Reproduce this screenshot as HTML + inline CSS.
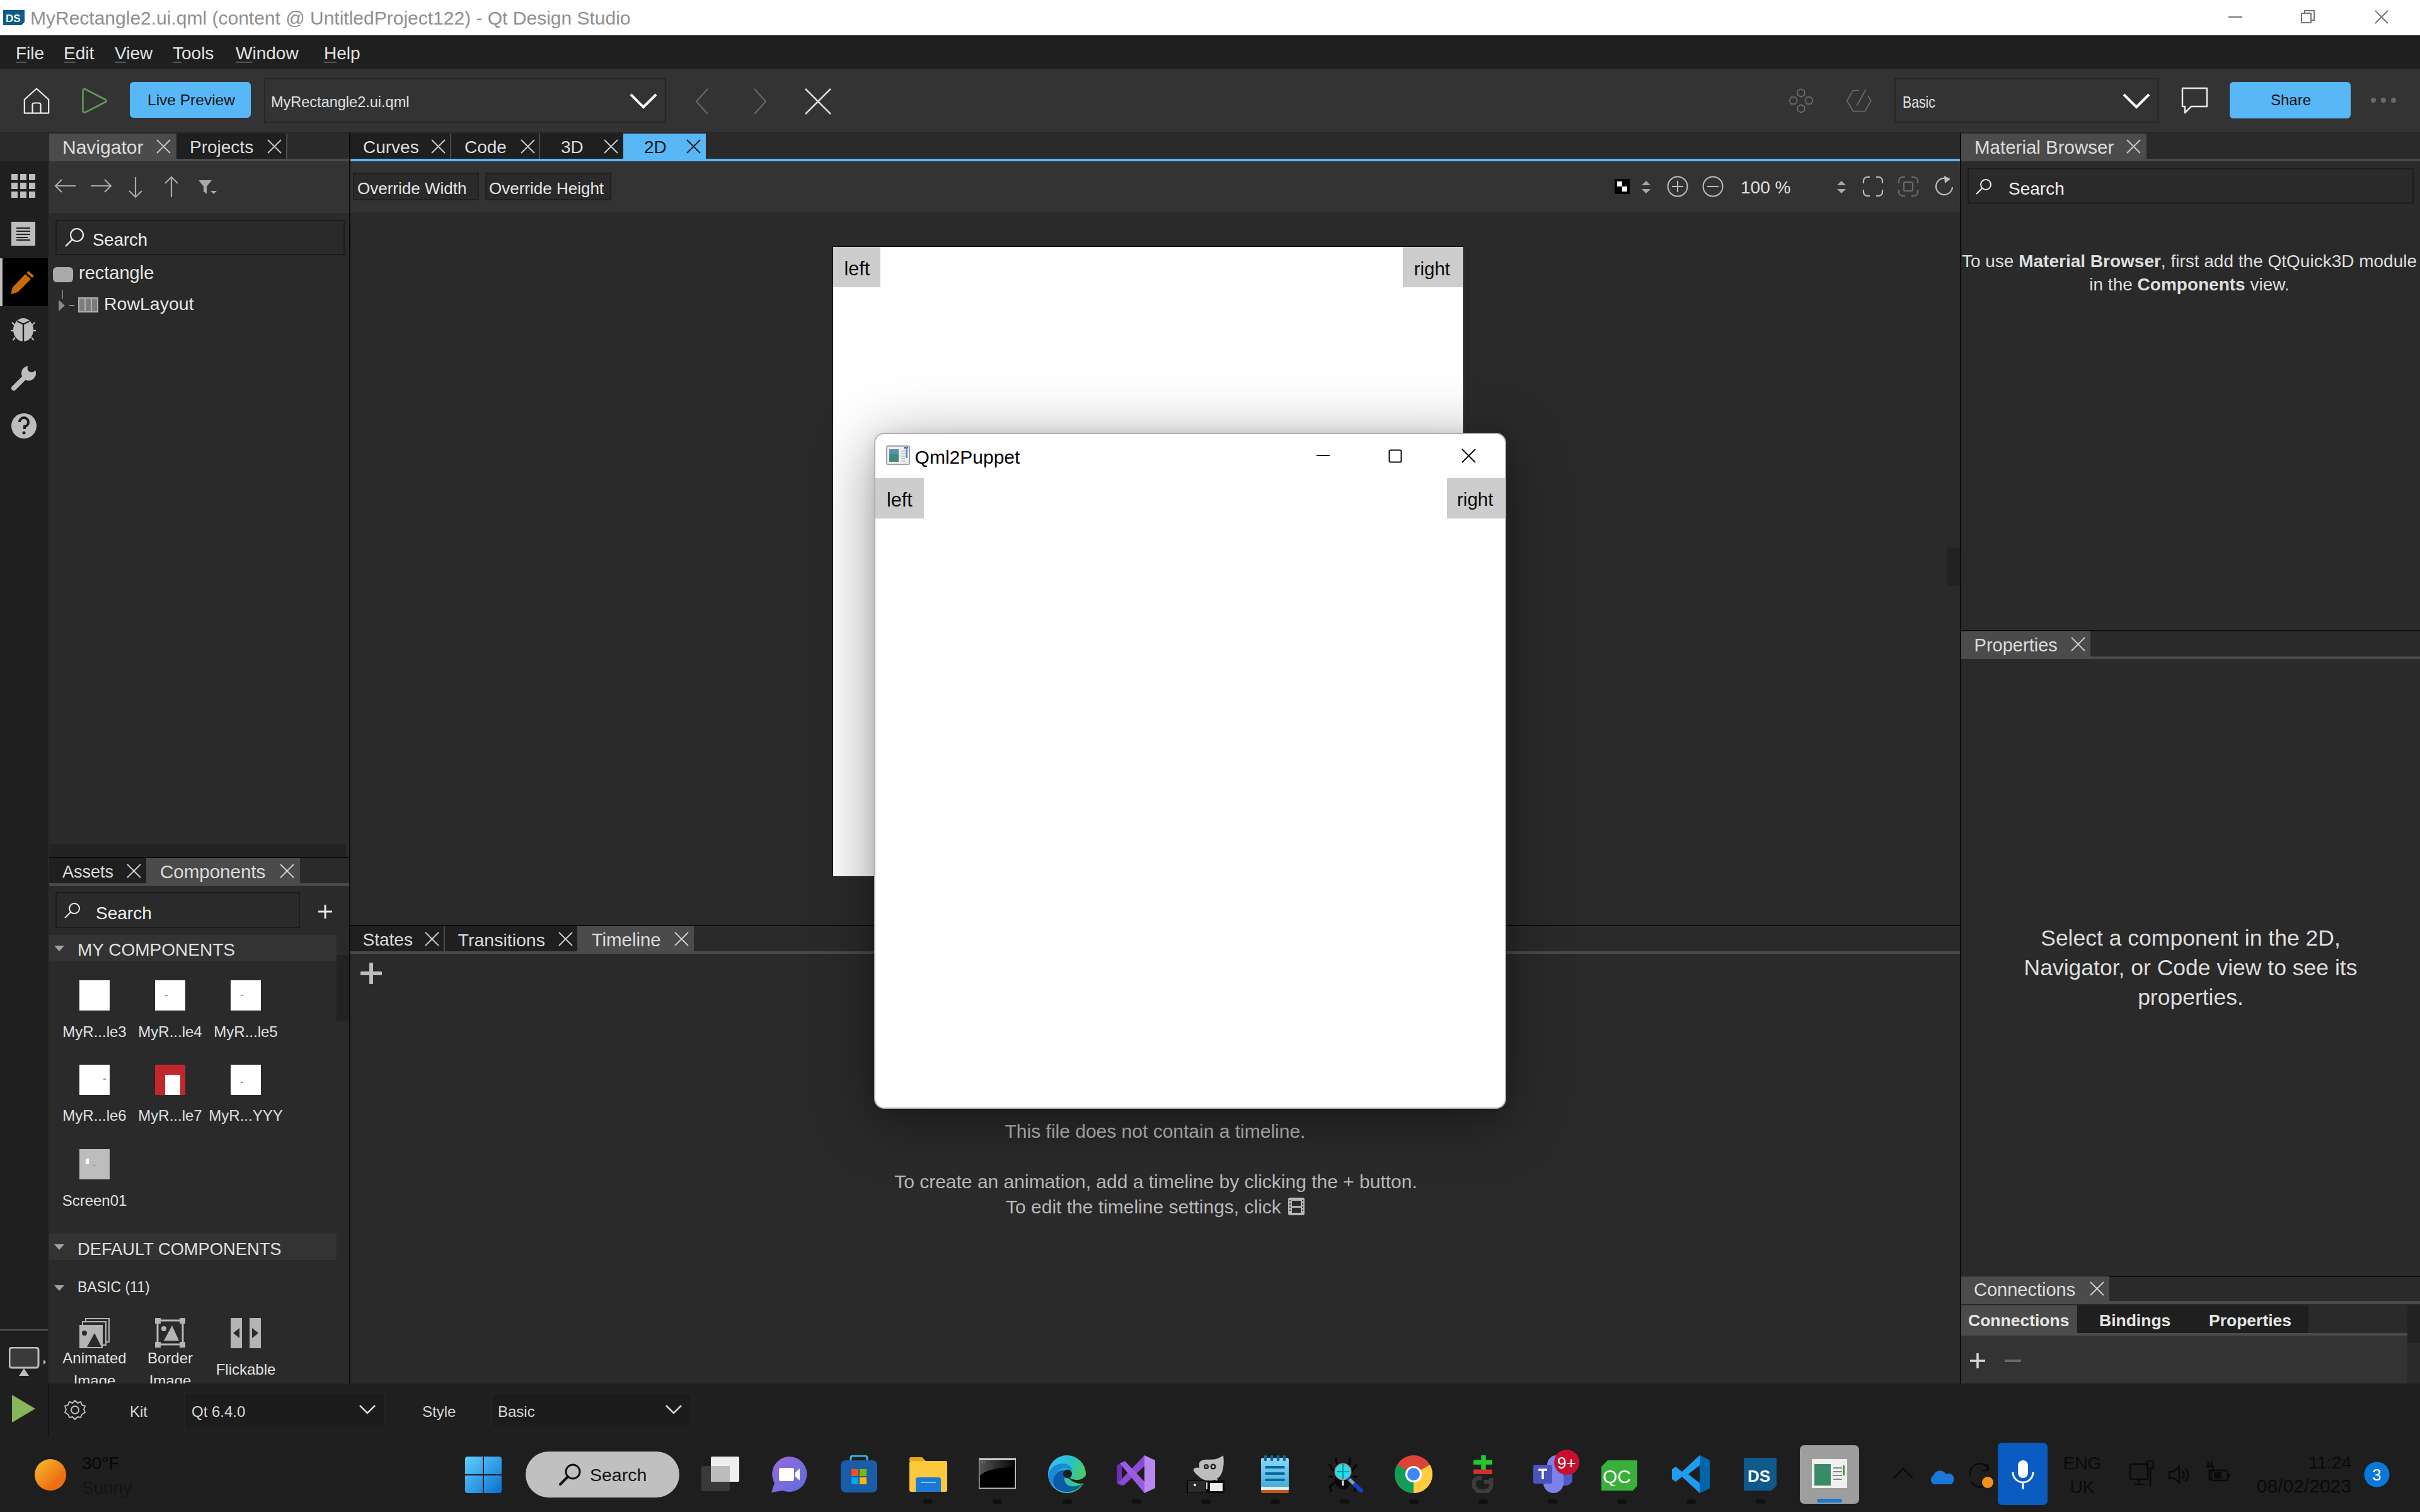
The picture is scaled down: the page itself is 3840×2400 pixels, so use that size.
<!DOCTYPE html>
<html><head><meta charset="utf-8"><style>
html,body{margin:0;padding:0;width:3840px;height:2400px;overflow:hidden;background:#2a2a2a;font-family:"Liberation Sans", sans-serif;}
.a{position:absolute;}
.t{position:absolute;white-space:pre;line-height:1;}
</style></head><body>
<div class="a" style="left:0px;top:0px;width:3840px;height:56px;background:#ffffff;"></div>
<div class="a" style="left:0px;top:56px;width:3840px;height:54px;background:#1f1f1f;"></div>
<div class="a" style="left:0px;top:110px;width:3840px;height:100px;background:#333333;"></div>
<div class="a" style="left:0px;top:210px;width:3840px;height:2px;background:#262626;"></div>
<div class="a" style="left:0px;top:212px;width:3840px;height:44px;background:#2a2a2a;"></div>
<svg class="a" style="left:5px;top:16px;" width="34" height="24" viewBox="0 0 34 24"><path d="M0 0H34V19L29 24H0Z" fill="#0e5a8a"/><text x="4" y="19" font-family="Liberation Sans" font-weight="700" font-size="17" fill="#fff">DS</text></svg>
<div class="t" style="left:48px;top:13.6px;font-size:30px;color:#8f8f8f;font-weight:400;">MyRectangle2.ui.qml (content @ UntitledProject122) - Qt Design Studio</div>
<div class="a" style="left:3536px;top:26px;width:22px;height:2px;background:#777;"></div>
<svg class="a" style="left:3650px;top:15px;" width="24" height="24" viewBox="0 0 24 24"><rect x="2" y="6" width="15" height="15" fill="none" stroke="#777" stroke-width="2"/><path d="M7 6V2H22V17H17" fill="none" stroke="#777" stroke-width="2"/></svg>
<svg class="a" style="left:3767px;top:15px;" width="24" height="24" viewBox="0 0 24 24"><path d="M2 2L22 22M22 2L2 22" stroke="#777" stroke-width="2"/></svg>
<div class="t" style="left:25px;top:71.3px;font-size:28px;color:#e2e2e2;font-weight:400;"><u style="text-decoration-thickness:1px;text-underline-offset:4px">F</u>ile</div>
<div class="t" style="left:101px;top:71.3px;font-size:28px;color:#e2e2e2;font-weight:400;"><u style="text-decoration-thickness:1px;text-underline-offset:4px">E</u>dit</div>
<div class="t" style="left:182px;top:71.3px;font-size:28px;color:#e2e2e2;font-weight:400;"><u style="text-decoration-thickness:1px;text-underline-offset:4px">V</u>iew</div>
<div class="t" style="left:274px;top:71.3px;font-size:28px;color:#e2e2e2;font-weight:400;"><u style="text-decoration-thickness:1px;text-underline-offset:4px">T</u>ools</div>
<div class="t" style="left:374px;top:71.3px;font-size:28px;color:#e2e2e2;font-weight:400;"><u style="text-decoration-thickness:1px;text-underline-offset:4px">W</u>indow</div>
<div class="t" style="left:514px;top:71.3px;font-size:28px;color:#e2e2e2;font-weight:400;"><u style="text-decoration-thickness:1px;text-underline-offset:4px">H</u>elp</div>
<div class="a" style="left:0px;top:256px;width:76px;height:1940px;background:#1f1f1f;"></div>
<div class="a" style="left:76px;top:256px;width:2px;height:1940px;background:#262626;"></div>
<svg class="a" style="left:37px;top:139px;" width="42" height="43" viewBox="0 0 42 43"><path d="M1.8 19L21 1.8L40.2 19V40.6H1.8Z" fill="none" stroke="#ececec" stroke-width="2.2" stroke-linejoin="round"/><path d="M14.5 40.6V27.5A3 3 0 0 1 17.5 24.5H24.5A3 3 0 0 1 27.5 27.5V40.6" fill="none" stroke="#ececec" stroke-width="2.2"/></svg>
<svg class="a" style="left:128px;top:139px;" width="44" height="44" viewBox="0 0 44 44"><path d="M3.5 5V37A2.5 2.5 0 0 0 7 39.5L40 22.5A1.8 1.8 0 0 0 40 19.5L7 2.5A2.5 2.5 0 0 0 3.5 5Z" fill="none" stroke="#5c9e52" stroke-width="2.6" stroke-linejoin="round"/></svg>
<div class="a" style="left:206px;top:130px;width:192px;height:57px;background:#57b7f7;border-radius:6px"></div>
<div class="t" style="left:234px;top:147.3px;font-size:24.5px;color:#111;font-weight:400;">Live Preview</div>
<div class="a" style="left:419px;top:124px;width:638px;height:71px;background:#333333;border:2px solid #262626;box-sizing:border-box"></div>
<div class="t" style="left:430px;top:151.1px;font-size:23.5px;color:#e0e0e0;font-weight:400;">MyRectangle2.ui.qml</div>
<svg class="a" style="left:999px;top:147px;" width="44" height="28" viewBox="0 0 44 28"><path d="M2 3L22 23L42 3" fill="none" stroke="#fff" stroke-width="4"/></svg>
<svg class="a" style="left:1102px;top:139px;" width="24" height="44" viewBox="0 0 24 44"><path d="M21 2L3 22L21 42" fill="none" stroke="#6a6a6a" stroke-width="2"/></svg>
<svg class="a" style="left:1194px;top:139px;" width="24" height="44" viewBox="0 0 24 44"><path d="M3 2L21 22L3 42" fill="none" stroke="#6a6a6a" stroke-width="2"/></svg>
<svg class="a" style="left:1276px;top:139px;" width="44" height="44" viewBox="0 0 44 44"><path d="M2 2L42 42M42 2L2 42" fill="none" stroke="#d8d8d8" stroke-width="2.5"/></svg>
<svg class="a" style="left:2836px;top:138px;" width="44" height="44" viewBox="0 0 44 44"><path d="M21.90 3.10L27.44 6.30L27.44 12.70L21.90 15.90L16.36 12.70L16.36 6.30Z" fill="none" stroke="#6e6e6e" stroke-width="1.6"/><path d="M16.00 21.60L12.80 27.14L6.40 27.14L3.20 21.60L6.40 16.06L12.80 16.06Z" fill="none" stroke="#6e6e6e" stroke-width="1.6"/><path d="M40.80 21.60L37.60 27.14L31.20 27.14L28.00 21.60L31.20 16.06L37.60 16.06Z" fill="none" stroke="#6e6e6e" stroke-width="1.6"/><path d="M22.00 28.00L27.54 31.20L27.54 37.60L22.00 40.80L16.46 37.60L16.46 31.20Z" fill="none" stroke="#6e6e6e" stroke-width="1.6"/></svg>
<svg class="a" style="left:2928px;top:138px;" width="44" height="44" viewBox="0 0 44 44"><path d="M22 5.5H12.3L2.8 22L12.3 38.5H31.3L40.8 22L36.3 14.2" fill="none" stroke="#6e6e6e" stroke-width="1.6"/><path d="M18.4 29.5L33 3.5" stroke="#6e6e6e" stroke-width="1.6"/></svg>
<div class="a" style="left:3006px;top:124px;width:419px;height:71px;background:#333333;border:2px solid #262626;box-sizing:border-box"></div>
<div class="t" style="left:3019px;top:150.3px;font-size:25px;color:#e0e0e0;font-weight:400;transform:scaleX(0.85);transform-origin:0 0">Basic</div>
<svg class="a" style="left:3368px;top:147px;" width="44" height="28" viewBox="0 0 44 28"><path d="M2 3L22 23L42 3" fill="none" stroke="#fff" stroke-width="4"/></svg>
<svg class="a" style="left:3461px;top:138px;" width="44" height="44" viewBox="0 0 44 44"><path d="M2 2H41V31H16L6 41V31H2Z" fill="none" stroke="#e8e8e8" stroke-width="2.5" stroke-linejoin="round"/></svg>
<div class="a" style="left:3538px;top:130px;width:192px;height:58px;background:#57b7f7;border-radius:6px"></div>
<div class="t" style="left:3603px;top:146.7px;font-size:24px;color:#111;font-weight:400;">Share</div>
<div class="a" style="left:3762px;top:155px;width:8px;height:8px;background:#6a6a6a;border-radius:50%"></div>
<div class="a" style="left:3778px;top:155px;width:8px;height:8px;background:#6a6a6a;border-radius:50%"></div>
<div class="a" style="left:3794px;top:155px;width:8px;height:8px;background:#6a6a6a;border-radius:50%"></div>
<div class="a" style="left:554px;top:210px;width:2px;height:1986px;background:#0c0c0c;"></div>
<div class="a" style="left:3110px;top:210px;width:2px;height:1986px;background:#0c0c0c;"></div>
<div class="a" style="left:78px;top:252px;width:476px;height:4px;background:#4b4b4b;"></div>
<div class="a" style="left:78px;top:212px;width:202px;height:40px;background:#4b4b4b;"></div>
<div class="t" style="left:99px;top:218.6px;font-size:30px;color:#dcdcdc;font-weight:400;">Navigator</div>
<svg class="a" style="left:248px;top:221px;" width="23" height="23" viewBox="0 0 23 23"><path d="M1 1L22 22M22 1L1 22" stroke="#d0d0d0" stroke-width="1.8" fill="none"/></svg>
<div class="a" style="left:280px;top:212px;width:176px;height:40px;background:#1f1f1f;"></div>
<div class="t" style="left:301px;top:220.3px;font-size:28px;color:#dcdcdc;font-weight:400;">Projects</div>
<svg class="a" style="left:424px;top:221px;" width="23" height="23" viewBox="0 0 23 23"><path d="M1 1L22 22M22 1L1 22" stroke="#d0d0d0" stroke-width="1.8" fill="none"/></svg>
<div class="a" style="left:454px;top:212px;width:2px;height:40px;background:#4b4b4b;"></div>
<div class="a" style="left:78px;top:256px;width:476px;height:82px;background:#333333;"></div>
<svg class="a" style="left:86px;top:283px;" width="36" height="24" viewBox="0 0 36 24"><path d="M2 12H34M12 2L2 12L12 22" fill="none" stroke="#a8a8a8" stroke-width="2.2"/></svg>
<svg class="a" style="left:142px;top:283px;" width="36" height="24" viewBox="0 0 36 24"><path d="M2 12H34M24 2L34 12L24 22" fill="none" stroke="#a8a8a8" stroke-width="2.2"/></svg>
<svg class="a" style="left:203px;top:279px;" width="24" height="36" viewBox="0 0 24 36"><path d="M12 2V34M2 24L12 34L22 24" fill="none" stroke="#a8a8a8" stroke-width="2.2"/></svg>
<svg class="a" style="left:260px;top:279px;" width="24" height="36" viewBox="0 0 24 36"><path d="M12 2V34M2 12L12 2L22 12" fill="none" stroke="#a8a8a8" stroke-width="2.2"/></svg>
<svg class="a" style="left:314px;top:285px;" width="30" height="24" viewBox="0 0 30 24"><path d="M1 1H22L14 11V23L9 19V11Z" fill="#a8a8a8"/><path d="M20 18H30L25 23Z" fill="#a8a8a8"/></svg>
<div class="a" style="left:78px;top:338px;width:476px;height:1022px;background:#2a2a2a;"></div>
<div class="a" style="left:88px;top:349px;width:459px;height:56px;background:#2a2a2a;border:2px solid #1c1c1c;box-sizing:border-box"></div>
<svg class="a" style="left:102px;top:360px;" width="34" height="34" viewBox="0 0 34 34"><circle cx="20" cy="13" r="10" fill="none" stroke="#f0f0f0" stroke-width="2.2"/><path d="M13 20L2 31" stroke="#f0f0f0" stroke-width="2.4"/></svg>
<div class="t" style="left:147px;top:366.7px;font-size:27.5px;color:#f0f0f0;font-weight:400;">Search</div>
<div class="a" style="left:84px;top:424px;width:32px;height:24px;background:#aaaaaa;border-radius:6px"></div>
<div class="t" style="left:125px;top:419.0px;font-size:29px;color:#e6e6e6;font-weight:400;">rectangle</div>
<div class="a" style="left:98px;top:460px;width:2px;height:14px;background:#7a7a7a;"></div>
<svg class="a" style="left:93px;top:476px;" width="11" height="18" viewBox="0 0 11 18"><path d="M0 0L10 9L0 18Z" fill="#8a8a8a"/></svg>
<div class="a" style="left:110px;top:484px;width:8px;height:2px;background:#8a8a8a;"></div>
<svg class="a" style="left:124px;top:472px;" width="32" height="24" viewBox="0 0 32 24"><rect x="1" y="1" width="30" height="22" fill="#7c7c7c" stroke="#b0b0b0" stroke-width="2"/><path d="M11 1V23M21 1V23" stroke="#b0b0b0" stroke-width="2"/></svg>
<div class="t" style="left:165px;top:468.3px;font-size:28.5px;color:#e6e6e6;font-weight:400;">RowLayout</div>
<div class="a" style="left:78px;top:1340px;width:471px;height:20px;background:#222222;"></div>
<div class="a" style="left:78px;top:1360px;width:476px;height:2px;background:#0c0c0c;"></div>
<div class="a" style="left:78px;top:1362px;width:476px;height:44px;background:#2a2a2a;"></div>
<div class="a" style="left:78px;top:1402px;width:476px;height:4px;background:#4b4b4b;"></div>
<div class="a" style="left:78px;top:1362px;width:154px;height:40px;background:#1f1f1f;"></div>
<div class="t" style="left:99px;top:1371.1px;font-size:27px;color:#dcdcdc;font-weight:400;">Assets</div>
<svg class="a" style="left:201px;top:1371px;" width="23" height="23" viewBox="0 0 23 23"><path d="M1 1L22 22M22 1L1 22" stroke="#d0d0d0" stroke-width="1.8" fill="none"/></svg>
<div class="a" style="left:232px;top:1362px;width:244px;height:40px;background:#4b4b4b;"></div>
<div class="t" style="left:254px;top:1369.0px;font-size:29.5px;color:#dcdcdc;font-weight:400;">Components</div>
<svg class="a" style="left:444px;top:1371px;" width="23" height="23" viewBox="0 0 23 23"><path d="M1 1L22 22M22 1L1 22" stroke="#d0d0d0" stroke-width="1.8" fill="none"/></svg>
<div class="a" style="left:78px;top:1406px;width:476px;height:790px;background:#2a2a2a;"></div>
<div class="a" style="left:88px;top:1416px;width:388px;height:57px;background:#2a2a2a;border:2px solid #1c1c1c;box-sizing:border-box"></div>
<svg class="a" style="left:102px;top:1432px;" width="26" height="26" viewBox="0 0 26 26"><circle cx="16" cy="10" r="8" fill="none" stroke="#f0f0f0" stroke-width="2"/><path d="M10 16L1 25" stroke="#f0f0f0" stroke-width="2"/></svg>
<div class="t" style="left:152px;top:1436.3px;font-size:28px;color:#f0f0f0;font-weight:400;">Search</div>
<svg class="a" style="left:505px;top:1436px;" width="22" height="22" viewBox="0 0 22 22"><path d="M11 0V22M0 11H22" stroke="#e6e6e6" stroke-width="3"/></svg>
<div class="a" style="left:78px;top:1484px;width:456px;height:42px;background:#333333;"></div>
<svg class="a" style="left:86px;top:1501px;" width="16" height="9" viewBox="0 0 16 9"><path d="M0 0H16L8 9Z" fill="#a0a0a0"/></svg>
<div class="t" style="left:123px;top:1494.3px;font-size:28px;color:#e0e0e0;font-weight:400;">MY COMPONENTS</div>
<div class="a" style="left:534px;top:1516px;width:20px;height:104px;background:#222222;"></div>
<div class="a" style="left:126px;top:1556px;width:48px;height:48px;background:#ffffff;"></div>
<div class="t" style="left:-1350px;width:3000px;text-align:center;top:1625.7px;font-size:24px;color:#e0e0e0;font-weight:400;">MyR...le3</div>
<div class="a" style="left:246px;top:1556px;width:48px;height:48px;background:#ffffff;"></div>
<div class="t" style="left:-1230px;width:3000px;text-align:center;top:1625.7px;font-size:24px;color:#e0e0e0;font-weight:400;">MyR...le4</div>
<div class="a" style="left:366px;top:1556px;width:48px;height:48px;background:#ffffff;"></div>
<div class="t" style="left:-1110px;width:3000px;text-align:center;top:1625.7px;font-size:24px;color:#e0e0e0;font-weight:400;">MyR...le5</div>
<div class="a" style="left:126px;top:1690px;width:48px;height:48px;background:#ffffff;"></div>
<div class="t" style="left:-1350px;width:3000px;text-align:center;top:1758.7px;font-size:24px;color:#e0e0e0;font-weight:400;">MyR...le6</div>
<div class="a" style="left:246px;top:1690px;width:48px;height:48px;background:#ffffff;"></div>
<div class="t" style="left:-1230px;width:3000px;text-align:center;top:1758.7px;font-size:24px;color:#e0e0e0;font-weight:400;">MyR...le7</div>
<div class="a" style="left:366px;top:1690px;width:48px;height:48px;background:#ffffff;"></div>
<div class="t" style="left:-1110px;width:3000px;text-align:center;top:1758.7px;font-size:24px;color:#e0e0e0;font-weight:400;">MyR...YYY</div>
<div class="a" style="left:246px;top:1690px;width:48px;height:48px;background:#c1272d;"></div>
<div class="a" style="left:262px;top:1706px;width:24px;height:32px;background:#ffffff;"></div>
<div class="a" style="left:126px;top:1824px;width:48px;height:48px;background:#bdbdbd;"></div>
<div class="a" style="left:136px;top:1839px;width:5px;height:9px;background:#ffffff;"></div>
<div class="a" style="left:148px;top:1850px;width:4px;height:1px;background:#888;"></div>
<div class="a" style="left:262px;top:1579px;width:4px;height:2px;background:#999;"></div>
<div class="a" style="left:382px;top:1579px;width:4px;height:2px;background:#999;"></div>
<div class="a" style="left:164px;top:1712px;width:4px;height:2px;background:#999;"></div>
<div class="a" style="left:382px;top:1717px;width:3px;height:2px;background:#777;"></div>
<div class="t" style="left:-1350px;width:3000px;text-align:center;top:1893.7px;font-size:24px;color:#e0e0e0;font-weight:400;">Screen01</div>
<div class="a" style="left:78px;top:1958px;width:456px;height:42px;background:#333333;"></div>
<svg class="a" style="left:86px;top:1975px;" width="16" height="9" viewBox="0 0 16 9"><path d="M0 0H16L8 9Z" fill="#a0a0a0"/></svg>
<div class="t" style="left:123px;top:1969.4px;font-size:27.3px;color:#e0e0e0;font-weight:400;">DEFAULT COMPONENTS</div>
<svg class="a" style="left:86px;top:2040px;" width="16" height="9" viewBox="0 0 16 9"><path d="M0 0H16L8 9Z" fill="#a0a0a0"/></svg>
<div class="t" style="left:123px;top:2031.5px;font-size:23px;color:#e0e0e0;font-weight:400;">BASIC (11)</div>
<svg class="a" style="left:126px;top:2092px;" width="48" height="48" viewBox="0 0 48 48"><rect x="10" y="1" width="37" height="37" fill="none" stroke="#b4b4b4" stroke-width="2"/><rect x="5" y="6" width="37" height="37" fill="#2a2a2a" stroke="#b4b4b4" stroke-width="2"/><rect x="0" y="11" width="37" height="37" fill="#b4b4b4"/><circle cx="8" cy="24" r="4" fill="#2a2a2a"/><path d="M12 46L24 24L35 46Z" fill="#2a2a2a"/></svg>
<svg class="a" style="left:246px;top:2092px;" width="48" height="48" viewBox="0 0 48 48"><rect x="4" y="4" width="40" height="38" fill="none" stroke="#b4b4b4" stroke-width="3"/><rect x="0" y="0" width="9" height="9" fill="#b4b4b4"/><rect x="39" y="0" width="9" height="9" fill="#b4b4b4"/><rect x="0" y="38" width="9" height="9" fill="#b4b4b4"/><rect x="39" y="38" width="9" height="9" fill="#b4b4b4"/><circle cx="14" cy="17" r="4" fill="#b4b4b4"/><path d="M14 36L27 12L38 36Z" fill="#b4b4b4"/></svg>
<svg class="a" style="left:366px;top:2092px;" width="48" height="48" viewBox="0 0 48 48"><rect x="0" y="0" width="18" height="48" fill="#b4b4b4"/><rect x="30" y="0" width="18" height="48" fill="#b4b4b4"/><path d="M4 24L14 16V32Z" fill="#2a2a2a"/><path d="M44 24L34 16V32Z" fill="#2a2a2a"/></svg>
<div class="t" style="left:-1350px;width:3000px;text-align:center;top:2143.7px;font-size:24px;color:#e0e0e0;font-weight:400;">Animated</div>
<div class="t" style="left:-1350px;width:3000px;text-align:center;top:2179.7px;font-size:24px;color:#e0e0e0;font-weight:400;">Image</div>
<div class="t" style="left:-1230px;width:3000px;text-align:center;top:2143.7px;font-size:24px;color:#e0e0e0;font-weight:400;">Border</div>
<div class="t" style="left:-1230px;width:3000px;text-align:center;top:2179.7px;font-size:24px;color:#e0e0e0;font-weight:400;">Image</div>
<div class="t" style="left:-1110px;width:3000px;text-align:center;top:2161.7px;font-size:24px;color:#e0e0e0;font-weight:400;">Flickable</div>
<svg class="a" style="left:18px;top:276px;" width="38" height="38" viewBox="0 0 38 38"><rect x="0" y="0" width="10" height="10" fill="#bdbdbd"/><rect x="14" y="0" width="10" height="10" fill="#bdbdbd"/><rect x="28" y="0" width="10" height="10" fill="#bdbdbd"/><rect x="0" y="14" width="10" height="10" fill="#bdbdbd"/><rect x="14" y="14" width="10" height="10" fill="#bdbdbd"/><rect x="28" y="14" width="10" height="10" fill="#bdbdbd"/><rect x="0" y="28" width="10" height="10" fill="#bdbdbd"/><rect x="14" y="28" width="10" height="10" fill="#bdbdbd"/><rect x="28" y="28" width="10" height="10" fill="#bdbdbd"/></svg>
<svg class="a" style="left:18px;top:352px;" width="38" height="38" viewBox="0 0 38 38"><rect x="0" y="0" width="38" height="38" fill="#bdbdbd"/><path d="M8 10H30M8 15H30M8 20H30M8 25H26M8 29H30" stroke="#222" stroke-width="2"/></svg>
<div class="a" style="left:0px;top:410px;width:76px;height:76px;background:#000000;"></div>
<div class="a" style="left:0px;top:410px;width:4px;height:76px;background:#bdbdbd;"></div>
<svg class="a" style="left:16px;top:428px;" width="40" height="40" viewBox="0 0 40 40"><path d="M29 2L38 10L12 36L1 39L4 28Z" fill="#c86a0a"/><path d="M25 6L34 14" stroke="#000" stroke-width="3"/></svg>
<svg class="a" style="left:17px;top:502px;" width="40" height="42" viewBox="0 0 40 42"><ellipse cx="20" cy="21.5" rx="16" ry="18.5" fill="#bdbdbd"/><path d="M10.5 8L20 12.5L29.5 8M20 12.5V41" stroke="#1f1f1f" stroke-width="2.4" fill="none"/><path d="M1.9 9.8L6.3 14.2M38.1 9.8L33.7 14.2M-1 22.9H4.5M41 22.9H35.5M3.4 38L7 33.6M36.6 38L33 33.6" stroke="#bdbdbd" stroke-width="2.2"/></svg>
<svg class="a" style="left:17px;top:580px;" width="40" height="40" viewBox="0 0 40 40"><circle cx="28.5" cy="12.5" r="11.5" fill="#bdbdbd"/><path d="M5 36L22 19" stroke="#bdbdbd" stroke-width="8" stroke-linecap="round"/><circle cx="33" cy="4.5" r="6.5" fill="#1f1f1f"/><path d="M33 4.5L44 -6.5" stroke="#1f1f1f" stroke-width="13"/></svg>
<svg class="a" style="left:17px;top:656px;" width="42" height="42" viewBox="0 0 42 42"><circle cx="21" cy="20" r="20" fill="#bdbdbd"/><path d="M14 14A7 7 0 1 1 22 21V25" fill="none" stroke="#1f1f1f" stroke-width="4"/><circle cx="21" cy="31" r="2.5" fill="#1f1f1f"/></svg>
<div class="a" style="left:0px;top:2110px;width:76px;height:2px;background:#555555;"></div>
<svg class="a" style="left:14px;top:2138px;" width="60" height="48" viewBox="0 0 60 48"><rect x="1" y="1" width="46" height="32" rx="4" fill="#3a3a3a" stroke="#bdbdbd" stroke-width="3"/><path d="M16 46L24 34L32 46Z" fill="#bdbdbd"/><path d="M55 20L59 24L55 28Z" fill="#bdbdbd"/></svg>
<div class="a" style="left:0px;top:2196px;width:3840px;height:84px;background:#1f1f1f;"></div>
<svg class="a" style="left:19px;top:2214px;" width="38" height="44" viewBox="0 0 38 44"><path d="M0 0L37 22L0 44Z" fill="#86b55a"/></svg>
<div class="a" style="left:76px;top:2196px;width:2px;height:84px;background:#141414;"></div>
<svg class="a" style="left:102px;top:2221px;" width="34" height="34" viewBox="0 0 34 34"><path d="M17 2L21 6L26 4L28 9L33 11L31 16L33 21L28 24L26 29L21 28L17 32L13 28L8 29L6 24L1 21L3 16L1 11L6 9L8 4L13 6Z" fill="none" stroke="#bdbdbd" stroke-width="2" stroke-linejoin="round"/><circle cx="17" cy="17" r="6" fill="none" stroke="#bdbdbd" stroke-width="2"/></svg>
<div class="t" style="left:206px;top:2228.7px;font-size:24px;color:#d8d8d8;font-weight:400;">Kit</div>
<div class="a" style="left:292px;top:2211px;width:319px;height:56px;background:#1c1c1c;border:1px solid #262626;box-sizing:border-box"></div>
<div class="t" style="left:304px;top:2228.7px;font-size:24px;color:#d8d8d8;font-weight:400;">Qt 6.4.0</div>
<svg class="a" style="left:569px;top:2229px;" width="28" height="18" viewBox="0 0 28 18"><path d="M2 2L14 14L26 2" fill="none" stroke="#d8d8d8" stroke-width="2.5"/></svg>
<div class="t" style="left:670px;top:2228.7px;font-size:24px;color:#d8d8d8;font-weight:400;">Style</div>
<div class="a" style="left:779px;top:2211px;width:318px;height:56px;background:#1c1c1c;border:1px solid #262626;box-sizing:border-box"></div>
<div class="t" style="left:790px;top:2228.7px;font-size:24px;color:#d8d8d8;font-weight:400;">Basic</div>
<svg class="a" style="left:1055px;top:2229px;" width="28" height="18" viewBox="0 0 28 18"><path d="M2 2L14 14L26 2" fill="none" stroke="#d8d8d8" stroke-width="2.5"/></svg>
<div class="a" style="left:3820px;top:2196px;width:20px;height:84px;background:#1f1f1f;"></div>
<div class="a" style="left:556px;top:252px;width:2554px;height:4px;background:#57b7f7;"></div>
<div class="a" style="left:556px;top:212px;width:160px;height:40px;background:#1f1f1f;"></div>
<div class="t" style="left:576px;top:220.3px;font-size:28px;color:#dcdcdc;font-weight:400;">Curves</div>
<svg class="a" style="left:684px;top:221px;" width="23" height="23" viewBox="0 0 23 23"><path d="M1 1L22 22M22 1L1 22" stroke="#d0d0d0" stroke-width="1.8" fill="none"/></svg>
<div class="a" style="left:714px;top:212px;width:2px;height:40px;background:#4b4b4b;"></div>
<div class="a" style="left:716px;top:212px;width:141px;height:40px;background:#1f1f1f;"></div>
<div class="t" style="left:737px;top:220.3px;font-size:28px;color:#dcdcdc;font-weight:400;">Code</div>
<svg class="a" style="left:826px;top:221px;" width="23" height="23" viewBox="0 0 23 23"><path d="M1 1L22 22M22 1L1 22" stroke="#d0d0d0" stroke-width="1.8" fill="none"/></svg>
<div class="a" style="left:855px;top:212px;width:2px;height:40px;background:#4b4b4b;"></div>
<div class="a" style="left:857px;top:212px;width:132px;height:40px;background:#1f1f1f;"></div>
<div class="t" style="left:890px;top:220.3px;font-size:28px;color:#dcdcdc;font-weight:400;">3D</div>
<svg class="a" style="left:958px;top:221px;" width="23" height="23" viewBox="0 0 23 23"><path d="M1 1L22 22M22 1L1 22" stroke="#d0d0d0" stroke-width="1.8" fill="none"/></svg>
<div class="a" style="left:989px;top:212px;width:131px;height:40px;background:#57b7f7;"></div>
<div class="t" style="left:1022px;top:220.3px;font-size:28px;color:#111;font-weight:400;">2D</div>
<svg class="a" style="left:1089px;top:221px;" width="23" height="23" viewBox="0 0 23 23"><path d="M1 1L22 22M22 1L1 22" stroke="#111" stroke-width="1.8" fill="none"/></svg>
<div class="a" style="left:556px;top:256px;width:2554px;height:81px;background:#333333;"></div>
<div class="a" style="left:560px;top:274px;width:200px;height:44px;background:#2a2a2a;border:2px solid #1f1f1f;box-sizing:border-box"></div>
<div class="t" style="left:567px;top:286.0px;font-size:26px;color:#e6e6e6;font-weight:400;">Override Width</div>
<div class="a" style="left:770px;top:274px;width:200px;height:44px;background:#2a2a2a;border:2px solid #1f1f1f;box-sizing:border-box"></div>
<div class="t" style="left:776px;top:286.0px;font-size:26px;color:#e6e6e6;font-weight:400;">Override Height</div>
<svg class="a" style="left:2562px;top:284px;" width="24" height="24" viewBox="0 0 24 24"><rect width="24" height="24" fill="#000"/><rect x="4" y="4" width="8" height="8" fill="#fff"/><rect x="12" y="12" width="8" height="8" fill="#fff"/></svg>
<svg class="a" style="left:2604px;top:286px;" width="16" height="22" viewBox="0 0 16 22"><path d="M1 8L8 1L15 8Z M1 14L8 21L15 14Z" fill="#a8a8a8"/></svg>
<svg class="a" style="left:2645px;top:279px;" width="34" height="34" viewBox="0 0 34 34"><circle cx="17" cy="17" r="15.5" fill="none" stroke="#bdbdbd" stroke-width="2"/><path d="M17 8V26M8 17H26" stroke="#bdbdbd" stroke-width="2"/></svg>
<svg class="a" style="left:2701px;top:279px;" width="34" height="34" viewBox="0 0 34 34"><circle cx="17" cy="17" r="15.5" fill="none" stroke="#bdbdbd" stroke-width="2"/><path d="M8 17H26" stroke="#bdbdbd" stroke-width="2"/></svg>
<div class="t" style="left:2762px;top:283.8px;font-size:28px;color:#e0e0e0;font-weight:400;">100 %</div>
<svg class="a" style="left:2914px;top:286px;" width="16" height="22" viewBox="0 0 16 22"><path d="M1 8L8 1L15 8Z M1 14L8 21L15 14Z" fill="#a8a8a8"/></svg>
<svg class="a" style="left:2955px;top:279px;" width="34" height="34" viewBox="0 0 34 34"><path d="M2 12V8A6 6 0 0 1 8 2H12M22 2H26A6 6 0 0 1 32 8V12M32 22V26A6 6 0 0 1 26 32H22M12 32H8A6 6 0 0 1 2 26V22" fill="none" stroke="#bdbdbd" stroke-width="2.2"/></svg>
<svg class="a" style="left:3011px;top:279px;" width="34" height="34" viewBox="0 0 34 34"><path d="M2 12V8A6 6 0 0 1 8 2H12M22 2H26A6 6 0 0 1 32 8V12M32 22V26A6 6 0 0 1 26 32H22M12 32H8A6 6 0 0 1 2 26V22" fill="none" stroke="#6a6a6a" stroke-width="2.2"/><rect x="10" y="10" width="14" height="14" rx="2" fill="none" stroke="#6a6a6a" stroke-width="2.2"/></svg>
<svg class="a" style="left:3068px;top:279px;" width="34" height="34" viewBox="0 0 34 34"><path d="M22 5A13 13 0 1 0 30 18" fill="none" stroke="#bdbdbd" stroke-width="2.2"/><path d="M17 0L27 5L18 12Z" fill="#bdbdbd"/></svg>
<div class="a" style="left:556px;top:337px;width:2554px;height:1131px;background:#2a2a2a;"></div>
<div class="a" style="left:1321px;top:391px;width:1002px;height:1001px;background:#000000;"></div>
<div class="a" style="left:1322px;top:392px;width:1000px;height:999px;background:#ffffff;"></div>
<div class="a" style="left:1322px;top:392px;width:75px;height:64px;background:#cdcdcd;"></div>
<div class="t" style="left:1339.5px;top:411.2px;font-size:30.5px;color:#0a0a0a;font-weight:400;">left</div>
<div class="a" style="left:2226px;top:392px;width:95px;height:64px;background:#cdcdcd;"></div>
<div class="t" style="left:2243.6px;top:412.0px;font-size:29.5px;color:#0a0a0a;font-weight:400;">right</div>
<div class="a" style="left:3090px;top:869px;width:20px;height:61px;background:#222222;"></div>
<div class="a" style="left:556px;top:1468px;width:2554px;height:2px;background:#0c0c0c;"></div>
<div class="a" style="left:556px;top:1470px;width:2554px;height:40px;background:#2a2a2a;"></div>
<div class="a" style="left:556px;top:1510px;width:2554px;height:4px;background:#4b4b4b;"></div>
<div class="a" style="left:556px;top:1470px;width:150px;height:40px;background:#1f1f1f;"></div>
<div class="t" style="left:575.5px;top:1478.3px;font-size:28px;color:#dcdcdc;font-weight:400;">States</div>
<svg class="a" style="left:674px;top:1479px;" width="23" height="23" viewBox="0 0 23 23"><path d="M1 1L22 22M22 1L1 22" stroke="#d0d0d0" stroke-width="1.8" fill="none"/></svg>
<div class="a" style="left:704px;top:1470px;width:2px;height:40px;background:#4b4b4b;"></div>
<div class="a" style="left:706px;top:1470px;width:210px;height:40px;background:#1f1f1f;"></div>
<div class="t" style="left:726.6px;top:1477.9px;font-size:28.5px;color:#dcdcdc;font-weight:400;">Transitions</div>
<svg class="a" style="left:886px;top:1479px;" width="23" height="23" viewBox="0 0 23 23"><path d="M1 1L22 22M22 1L1 22" stroke="#d0d0d0" stroke-width="1.8" fill="none"/></svg>
<div class="a" style="left:916px;top:1470px;width:185px;height:40px;background:#4b4b4b;"></div>
<div class="t" style="left:938.7px;top:1477.1px;font-size:29.4px;color:#dcdcdc;font-weight:400;">Timeline</div>
<svg class="a" style="left:1069.5px;top:1479px;" width="23" height="23" viewBox="0 0 23 23"><path d="M1 1L22 22M22 1L1 22" stroke="#d0d0d0" stroke-width="1.8" fill="none"/></svg>
<div class="a" style="left:556px;top:1514px;width:2554px;height:682px;background:#2a2a2a;"></div>
<svg class="a" style="left:572px;top:1528px;" width="34" height="34" viewBox="0 0 34 34"><path d="M17 2V32M2 17H32" stroke="#bdbdbd" stroke-width="6" stroke-linecap="round"/></svg>
<div class="t" style="left:333px;width:3000px;text-align:center;top:1780.6px;font-size:30px;color:#b8b8b8;font-weight:400;">This file does not contain a timeline.</div>
<div class="t" style="left:334px;width:3000px;text-align:center;top:1860.6px;font-size:30px;color:#b8b8b8;font-weight:400;">To create an animation, add a timeline by clicking the + button.</div>
<div class="t" style="left:1596px;top:1900.6px;font-size:30px;color:#b8b8b8;font-weight:400;">To edit the timeline settings, click</div>
<svg class="a" style="left:2043px;top:1900px;" width="28" height="30" viewBox="0 0 28 30"><rect x="1" y="1" width="26" height="28" rx="3" fill="#b8b8b8"/><rect x="7" y="6" width="14" height="8" fill="#2a2a2a"/><rect x="7" y="17" width="14" height="8" fill="#2a2a2a"/><path d="M3 6H5M3 11H5M3 16H5M3 21H5M23 6H25M23 11H25M23 16H25M23 21H25" stroke="#2a2a2a" stroke-width="2"/></svg>
<div class="a" style="left:3112px;top:212px;width:728px;height:44px;background:#2a2a2a;"></div>
<div class="a" style="left:3112px;top:252px;width:728px;height:4px;background:#4b4b4b;"></div>
<div class="a" style="left:3112px;top:212px;width:294px;height:40px;background:#4b4b4b;"></div>
<div class="t" style="left:3133px;top:219.0px;font-size:29.5px;color:#dcdcdc;font-weight:400;">Material Browser</div>
<svg class="a" style="left:3374px;top:221px;" width="23" height="23" viewBox="0 0 23 23"><path d="M1 1L22 22M22 1L1 22" stroke="#d0d0d0" stroke-width="1.8" fill="none"/></svg>
<div class="a" style="left:3112px;top:256px;width:728px;height:744px;background:#2a2a2a;"></div>
<div class="a" style="left:3122px;top:267px;width:708px;height:56px;background:#2a2a2a;border:2px solid #1c1c1c;box-sizing:border-box"></div>
<svg class="a" style="left:3135px;top:283px;" width="26" height="26" viewBox="0 0 26 26"><circle cx="16" cy="10" r="8" fill="none" stroke="#f0f0f0" stroke-width="2"/><path d="M10 16L1 25" stroke="#f0f0f0" stroke-width="2"/></svg>
<div class="t" style="left:3187px;top:286.3px;font-size:28px;color:#f0f0f0;font-weight:400;">Search</div>
<div class="t" style="left:1974px;width:3000px;text-align:center;top:400.9px;font-size:28px;color:#dedede;font-weight:400;">To use <b>Material Browser</b>, first add the QtQuick3D module</div>
<div class="t" style="left:1974px;width:3000px;text-align:center;top:438.3px;font-size:28px;color:#dedede;font-weight:400;">in the <b>Components</b> view.</div>
<div class="a" style="left:3112px;top:1000px;width:728px;height:2px;background:#0c0c0c;"></div>
<div class="a" style="left:3112px;top:1002px;width:728px;height:44px;background:#2a2a2a;"></div>
<div class="a" style="left:3112px;top:1042px;width:728px;height:4px;background:#4b4b4b;"></div>
<div class="a" style="left:3112px;top:1002px;width:205px;height:40px;background:#4b4b4b;"></div>
<div class="t" style="left:3132.6px;top:1009.5px;font-size:29px;color:#dcdcdc;font-weight:400;">Properties</div>
<svg class="a" style="left:3286px;top:1011px;" width="23" height="23" viewBox="0 0 23 23"><path d="M1 1L22 22M22 1L1 22" stroke="#d0d0d0" stroke-width="1.8" fill="none"/></svg>
<div class="a" style="left:3112px;top:1046px;width:728px;height:979px;background:#2a2a2a;"></div>
<div class="t" style="left:1976px;width:3000px;text-align:center;top:1471.9px;font-size:35.5px;color:#dedede;font-weight:400;">Select a component in the 2D,</div>
<div class="t" style="left:1976px;width:3000px;text-align:center;top:1518.9px;font-size:35.5px;color:#dedede;font-weight:400;">Navigator, or Code view to see its</div>
<div class="t" style="left:1976px;width:3000px;text-align:center;top:1565.9px;font-size:35.5px;color:#dedede;font-weight:400;">properties.</div>
<div class="a" style="left:3112px;top:2025px;width:728px;height:2px;background:#0c0c0c;"></div>
<div class="a" style="left:3112px;top:2027px;width:728px;height:43px;background:#2a2a2a;"></div>
<div class="a" style="left:3112px;top:2065px;width:728px;height:5px;background:#4b4b4b;"></div>
<div class="a" style="left:3112px;top:2026px;width:235px;height:39px;background:#4b4b4b;"></div>
<div class="t" style="left:3132px;top:2032.5px;font-size:29px;color:#dcdcdc;font-weight:400;">Connections</div>
<svg class="a" style="left:3316px;top:2034px;" width="23" height="23" viewBox="0 0 23 23"><path d="M1 1L22 22M22 1L1 22" stroke="#d0d0d0" stroke-width="1.8" fill="none"/></svg>
<div class="a" style="left:3112px;top:2070px;width:728px;height:126px;background:#2a2a2a;"></div>
<div class="a" style="left:3112px;top:2072px;width:184px;height:46px;background:#4b4b4b;"></div>
<div class="a" style="left:3296px;top:2072px;width:367px;height:44px;background:#1f1f1f;"></div>
<div class="a" style="left:3112px;top:2116px;width:708px;height:4px;background:#4b4b4b;"></div>
<div class="t" style="left:3123px;top:2083.2px;font-size:26.5px;color:#e6e6e6;font-weight:700;">Connections</div>
<div class="t" style="left:3331px;top:2083.2px;font-size:26.5px;color:#e6e6e6;font-weight:700;">Bindings</div>
<div class="t" style="left:3505px;top:2083.2px;font-size:26.5px;color:#e6e6e6;font-weight:700;">Properties</div>
<div class="a" style="left:3112px;top:2120px;width:708px;height:76px;background:#333333;"></div>
<div class="a" style="left:3820px;top:2072px;width:20px;height:60px;background:#222222;"></div>
<svg class="a" style="left:3125px;top:2147px;" width="26" height="26" viewBox="0 0 26 26"><path d="M13 1V25M1 13H25" stroke="#d8d8d8" stroke-width="3.5"/></svg>
<div class="a" style="left:3181px;top:2158px;width:26px;height:4px;background:#6a6a6a;"></div>
<div class="a" style="left:1387px;top:687px;width:1003px;height:1073px;border-radius:16px;box-shadow:0 18px 100px rgba(0,0,0,0.42), 0 4px 20px rgba(0,0,0,0.10);"></div>
<div class="a" style="left:1387px;top:687px;width:999px;height:1069px;border-radius:16px;background:#fff;border:2px solid rgba(100,100,100,0.5);overflow:hidden;"><div class="a" style="left:0;top:70px;width:77px;height:64px;background:#cdcdcd"></div><div class="a" style="left:907px;top:70px;width:94px;height:64px;background:#cdcdcd"></div></div>
<svg class="a" style="left:1406px;top:707px;" width="38" height="31" viewBox="0 0 38 31"><rect x="1" y="1" width="36" height="29" rx="2" fill="#f4f4f4" stroke="#9aa4ac" stroke-width="2"/><rect x="5" y="6" width="15" height="20" fill="#3f8a78"/><rect x="5" y="6" width="15" height="8" fill="#5a8cb8"/><path d="M23 9H30M23 13H30M23 17H30M23 21H30M23 25H30" stroke="#b8b8b8" stroke-width="1.5"/><rect x="31" y="6" width="3" height="14" fill="#4a8bd0"/><rect x="28" y="3" width="7" height="2" fill="#4050a0"/></svg>
<div class="t" style="left:1451.6px;top:710.6px;font-size:30px;color:#000;font-weight:400;">Qml2Puppet</div>
<div class="a" style="left:2089px;top:722px;width:21px;height:2px;background:#111;"></div>
<svg class="a" style="left:2203px;top:713px;" width="22" height="22" viewBox="0 0 22 22"><rect x="1.5" y="1.5" width="19" height="19" rx="2" fill="none" stroke="#111" stroke-width="2"/></svg>
<svg class="a" style="left:2319px;top:712px;" width="23" height="23" viewBox="0 0 23 23"><path d="M1 1L22 22M22 1L1 22" stroke="#111" stroke-width="2"/></svg>
<div class="t" style="left:1407px;top:777.6px;font-size:30.5px;color:#0a0a0a;font-weight:400;">left</div>
<div class="t" style="left:2312px;top:778.4px;font-size:29.5px;color:#0a0a0a;font-weight:400;">right</div>
<div class="a" style="left:0px;top:2280px;width:3840px;height:120px;background:#1e1e1e;"></div>
<svg class="a" style="left:55px;top:2316px" width="50" height="50" viewBox="0 0 50 50"><defs><linearGradient id="sun" x1="0" y1="0" x2="1" y2="1"><stop offset="0" stop-color="#f5c030"/><stop offset="0.7" stop-color="#ee7010"/></linearGradient></defs><circle cx="25" cy="25" r="25" fill="url(#sun)"/></svg>
<div class="t" style="left:130px;top:2308.8px;font-size:28px;color:#060606;font-weight:400;">30°F</div>
<div class="t" style="left:130px;top:2348.3px;font-size:28px;color:#141414;font-weight:400;">Sunny</div>
<svg class="a" style="left:738px;top:2312px" width="58" height="58" viewBox="0 0 58 58"><defs><linearGradient id="win" x1="0" y1="0" x2="1" y2="1"><stop offset="0" stop-color="#5fd0ff"/><stop offset="1" stop-color="#0a6fd0"/></linearGradient></defs><path d="M0 4A4 4 0 0 1 4 0H28V28H0ZM30 0H54A4 4 0 0 1 58 4V28H30ZM0 30H28V58H4A4 4 0 0 1 0 54ZM30 30H58V54A4 4 0 0 1 54 58H30Z" fill="url(#win)"/></svg>
<div class="a" style="left:834px;top:2304px;width:244px;height:73px;background:#c0c0c0;border-radius:37px"></div>
<svg class="a" style="left:886px;top:2323px;" width="38" height="36" viewBox="0 0 38 36"><circle cx="23" cy="13" r="11" fill="none" stroke="#111" stroke-width="3"/><path d="M15 21L3 33" stroke="#111" stroke-width="4" stroke-linecap="round"/></svg>
<div class="t" style="left:936px;top:2326.9px;font-size:28.5px;color:#111;font-weight:400;">Search</div>
<svg class="a" style="left:1113px;top:2312px;" width="60" height="56" viewBox="0 0 60 56"><rect x="0" y="15" width="45" height="40" rx="3" fill="#3a3a3a"/><rect x="15" y="0" width="45" height="40" rx="2" fill="#efefef"/><rect x="15" y="15" width="30" height="25" fill="#bcbcbc"/></svg>
<svg class="a" style="left:1224px;top:2312px" width="57" height="57" viewBox="0 0 57 57"><defs><linearGradient id="chat" x1="0" y1="0" x2="1" y2="1"><stop offset="0" stop-color="#9a6ad8"/><stop offset="1" stop-color="#5a6ee0"/></linearGradient></defs><path d="M28 0A28 28 0 1 1 18 54L0 57L5 42A28 28 0 0 1 28 0Z" fill="url(#chat)"/><rect x="12" y="18" width="24" height="21" rx="3" fill="#fff"/><path d="M38 25L45 19V38L38 32Z" fill="#fff"/></svg>
<svg class="a" style="left:1334px;top:2310px;" width="58" height="59" viewBox="0 0 58 59"><path d="M16 12V4A3 3 0 0 1 19 1H39A3 3 0 0 1 42 4V12" fill="none" stroke="#30b8f0" stroke-width="3"/><rect x="0" y="8" width="58" height="51" rx="8" fill="#1a5ca8"/><rect x="17" y="22" width="11" height="11" fill="#f25022"/><rect x="30" y="22" width="11" height="11" fill="#7fba00"/><rect x="17" y="35" width="11" height="11" fill="#00a4ef"/><rect x="30" y="35" width="11" height="11" fill="#ffb900"/></svg>
<svg class="a" style="left:1443px;top:2313px;" width="60" height="55" viewBox="0 0 60 55"><path d="M0 3A3 3 0 0 1 3 0H20L26 6H0Z" fill="#e8a810"/><rect x="0" y="6" width="60" height="49" rx="3" fill="#fcc83c"/><path d="M10 55V36A4 4 0 0 1 14 32H46A4 4 0 0 1 50 36V55Z" fill="#1a7ad8"/><path d="M18 40H42" stroke="#8cc8f8" stroke-width="2"/></svg>
<div class="a" style="left:1465.0px;top:2380px;width:15px;height:7px;background:#101010;border-radius:4px"></div>
<svg class="a" style="left:1553px;top:2314px" width="59" height="49" viewBox="0 0 59 49"><defs><linearGradient id="tg" x1="0" y1="0" x2="1" y2="0"><stop offset="0" stop-color="#555"/><stop offset="1" stop-color="#050505"/></linearGradient></defs><rect x="0.75" y="0.75" width="57.5" height="47.5" fill="#000" stroke="#c8c8c8" stroke-width="1.5"/><path d="M1.5 2.5H57.5" stroke="#e0e0e0" stroke-width="2"/><path d="M1.5 3.5H57.5V15C32 15 10 19 1.5 29Z" fill="url(#tg)"/><path d="M4 7h3M8 7h2" stroke="#aaa" stroke-width="1"/></svg>
<div class="a" style="left:1575.0px;top:2380px;width:15px;height:7px;background:#101010;border-radius:4px"></div>
<svg class="a" style="left:1663px;top:2310px" width="60" height="60" viewBox="0 0 60 60"><defs><linearGradient id="edg" x1="0" y1="0.2" x2="1" y2="0.6"><stop offset="0" stop-color="#3ac0f8"/><stop offset="0.5" stop-color="#28c0c8"/><stop offset="1" stop-color="#50d050"/></linearGradient></defs><circle cx="30" cy="30" r="30" fill="url(#edg)"/><path d="M0.3 34C1 20 14 12 25 13C33 14 38 19 38 24C30 18 18 20 12 30C8 38 8 46 12 52A30 30 0 0 1 0.3 34Z" fill="#1a8ad8"/><path d="M12 52C6 44 8 34 14 28C20 22 30 22 34 28C26 30 24 38 28 44C34 52 46 50 55 45A30 30 0 0 1 12 52Z" fill="#0c5aa8"/><circle cx="31" cy="29.5" r="7" fill="#1e1e1e"/><path d="M33 35C40 40 52 42 60 32V43C52 47 42 45 33 37Z" fill="#1e1e1e"/></svg>
<div class="a" style="left:1686.0px;top:2380px;width:15px;height:7px;background:#101010;border-radius:4px"></div>
<svg class="a" style="left:1772px;top:2310px;" width="61" height="60" viewBox="0 0 61 60"><path d="M0 16L8 11V49L0 44Z" fill="#6a30b8"/><path d="M44 0V17L11 48L2 44Z" fill="#8a4ad2"/><path d="M5 13L13 9L44 42V60Z" fill="#9c5ce2"/><path d="M44 0L61 8V52L44 60Z" fill="#b888f0"/></svg>
<div class="a" style="left:1796.0px;top:2380px;width:15px;height:7px;background:#101010;border-radius:4px"></div>
<svg class="a" style="left:1883px;top:2310px;" width="60" height="60" viewBox="0 0 60 60"><path d="M20 12C24 4 36 8 46 6C52 4 56 2 58 0C60 12 58 28 52 34C44 42 30 42 22 36C18 32 14 30 12 26C8 22 14 18 20 20Z" fill="#bdbdbd"/><circle cx="31" cy="18" r="4" fill="#222"/><circle cx="42" cy="18" r="4.5" fill="#222"/><circle cx="31" cy="18" r="2" fill="#888"/><circle cx="42" cy="18" r="2" fill="#ccc"/><path d="M38 27L48 40" stroke="#bdbdbd" stroke-width="3"/><rect x="0" y="40" width="60" height="20" fill="#050505"/><rect x="2" y="41" width="28" height="18" fill="#2a2a2a"/><circle cx="13" cy="47" r="2" fill="#fff"/><rect x="31" y="43" width="2" height="11" fill="#ddd"/><rect x="37" y="44" width="20" height="13" fill="#eee"/></svg>
<div class="a" style="left:1906.0px;top:2380px;width:15px;height:7px;background:#101010;border-radius:4px"></div>
<svg class="a" style="left:2001px;top:2310px" width="44" height="60" viewBox="0 0 44 60"><defs><linearGradient id="np" x1="0" y1="0" x2="0" y2="1"><stop offset="0" stop-color="#8cd8f8"/><stop offset="1" stop-color="#3aa8d8"/></linearGradient></defs><rect x="0" y="4" width="44" height="52" rx="3" fill="url(#np)"/><rect x="0" y="50" width="44" height="5" fill="#e8e8e8"/><rect x="0" y="55" width="44" height="5" rx="2" fill="#c05a10"/><path d="M8 19H36M8 29H36M8 39H36" stroke="#0a6a98" stroke-width="4" stroke-linecap="round"/><path d="M7 2V7M17 2V7M27 2V7M37 2V7" stroke="#0a6a98" stroke-width="4.5" stroke-linecap="round"/></svg>
<div class="a" style="left:2016.0px;top:2380px;width:15px;height:7px;background:#101010;border-radius:4px"></div>
<svg class="a" style="left:2107px;top:2312px;" width="56" height="58" viewBox="0 0 56 58"><g stroke="#050505" stroke-width="3" fill="none"><path d="M15 14L12 2M33 14L36 2M10 24L2 12M38 24L46 12M8 32H1M40 32H47M12 40L3 48L6 56M36 40L45 48L42 56"/></g><ellipse cx="24" cy="36" rx="13" ry="16" fill="#0a0a0a"/><circle cx="24" cy="24" r="12.5" fill="#20e0f0"/><circle cx="24" cy="24" r="12.5" fill="none" stroke="#999" stroke-width="2"/><path d="M24 12V36M14 24H34" stroke="#0a90a0" stroke-width="2"/><rect x="22" y="38" width="4" height="8" fill="#ccc"/><path d="M34 36L53 54" stroke="#1040e0" stroke-width="6" stroke-linecap="round"/><path d="M34 36L41 43" stroke="#8a8" stroke-width="5"/></svg>
<div class="a" style="left:2126.0px;top:2380px;width:15px;height:7px;background:#101010;border-radius:4px"></div>
<svg class="a" style="left:2213px;top:2310px;" width="60" height="60" viewBox="0 0 60 60"><circle cx="30" cy="30" r="30" fill="#db4437"/><path d="M30 30L4 45A30 30 0 0 0 30 60Z" fill="#0f9d58"/><path d="M30 30L4 45A30 30 0 0 1 4 15Z" fill="#0f9d58"/><path d="M30 30L56 15A30 30 0 0 1 30 60Z" fill="#ffcd40"/><circle cx="30" cy="30" r="13" fill="#fff"/><circle cx="30" cy="30" r="10" fill="#4285f4"/></svg>
<div class="a" style="left:2236.0px;top:2380px;width:15px;height:7px;background:#101010;border-radius:4px"></div>
<svg class="a" style="left:2335px;top:2310px;" width="38" height="60" viewBox="0 0 38 60"><path d="M19 0V23M3 11H33" stroke="#22c830" stroke-width="7.5"/><rect x="3" y="22.5" width="30" height="7.5" fill="#d03030"/><path d="M31 36V50L26 57H10L4 50V40L10 36H16" fill="none" stroke="#3c3c3c" stroke-width="6.5" stroke-linejoin="bevel"/><path d="M20 42H31" stroke="#3c3c3c" stroke-width="6"/></svg>
<div class="a" style="left:2346.0px;top:2380px;width:15px;height:7px;background:#101010;border-radius:4px"></div>
<svg class="a" style="left:2433px;top:2300px;" width="80" height="70" viewBox="0 0 80 70"><rect x="22" y="10" width="30" height="40" rx="15" fill="#7b83eb"/><rect x="38" y="24" width="24" height="34" rx="10" fill="#5059c9"/><rect x="16" y="30" width="32" height="40" rx="16" fill="#7b83eb"/><rect x="0" y="25" width="30" height="30" rx="3" fill="#4b53bc"/><path d="M8 33H22M15 33V48" stroke="#fff" stroke-width="3.5"/><circle cx="53" cy="21" r="20" fill="#c8102e"/><text x="38" y="31" font-family="Liberation Sans" font-weight="400" font-size="26" fill="#fff">9+</text></svg>
<div class="a" style="left:2456.0px;top:2380px;width:15px;height:7px;background:#101010;border-radius:4px"></div>
<svg class="a" style="left:2541px;top:2318px;" width="57" height="48" viewBox="0 0 57 48"><path d="M10 0H57V40L50 48H0V10Z" fill="#3ab03a"/><text x="2" y="36" font-family="Liberation Sans" font-weight="400" font-size="30" fill="#fff">QC</text></svg>
<div class="a" style="left:2566.0px;top:2380px;width:15px;height:7px;background:#101010;border-radius:4px"></div>
<svg class="a" style="left:2653px;top:2310px;" width="60" height="60" viewBox="0 0 60 60"><path d="M44 0L60 8V52L44 60L16 34L6 42L0 38V22L6 18L16 26ZM44 16L26 30L44 44Z" fill="#1f9cf0"/><path d="M44 0L60 8V52L44 60Z" fill="#0065a9"/></svg>
<div class="a" style="left:2676.0px;top:2380px;width:15px;height:7px;background:#101010;border-radius:4px"></div>
<svg class="a" style="left:2767px;top:2314px;" width="52" height="52" viewBox="0 0 52 52"><path d="M0 0H52V44L44 52H0Z" fill="#0e5a8a"/><text x="6" y="38" font-family="Liberation Sans" font-weight="700" font-size="26" fill="#fff">DS</text></svg>
<div class="a" style="left:2786.0px;top:2380px;width:15px;height:7px;background:#101010;border-radius:4px"></div>
<div class="a" style="left:2856px;top:2294px;width:94px;height:93px;background:#9e9e9e;border-radius:7px"></div>
<svg class="a" style="left:2875px;top:2316px;" width="56" height="46" viewBox="0 0 56 46"><rect x="0" y="0" width="56" height="46" fill="#f0f0f0"/><rect x="4" y="8" width="26" height="34" fill="#3a8a6a"/><path d="M34 14H48M34 20H48M34 26H48M34 32H48" stroke="#888" stroke-width="2"/><rect x="49" y="10" width="3" height="16" fill="#30a030"/></svg>
<div class="a" style="left:2883px;top:2379px;width:40px;height:6px;background:#1a7ad8;border-radius:3px"></div>
<svg class="a" style="left:3003px;top:2328px;" width="34" height="20" viewBox="0 0 34 20"><path d="M2 18L17 3L32 18" fill="none" stroke="#0a0a0a" stroke-width="2.5"/></svg>
<svg class="a" style="left:3060px;top:2334px;" width="42" height="22" viewBox="0 0 42 22"><path d="M8 22A8 8 0 0 1 8 8A11 11 0 0 1 28 6A8 8 0 0 1 40 14A8 8 0 0 1 36 22Z" fill="#1a78d8"/></svg>
<svg class="a" style="left:3120px;top:2320px;" width="44" height="44" viewBox="0 0 44 44"><path d="M6 22A16 16 0 0 1 36 12M38 22A16 16 0 0 1 8 32" fill="none" stroke="#0a0a0a" stroke-width="2.5"/><path d="M34 4V14H24" fill="none" stroke="#0a0a0a" stroke-width="2.5"/><circle cx="34" cy="33" r="9" fill="#f5901e"/></svg>
<div class="a" style="left:3170px;top:2290px;width:79px;height:99px;background:#0a5cc0;border-radius:7px"></div>
<svg class="a" style="left:3191px;top:2317px;" width="38" height="48" viewBox="0 0 38 48"><rect x="11" y="1" width="16" height="28" rx="8" fill="#fff"/><path d="M3 20A16 16 0 0 0 35 20M19 36V47" fill="none" stroke="#fff" stroke-width="3"/></svg>
<div class="t" style="left:1804px;width:3000px;text-align:center;top:2308.7px;font-size:28px;color:#0a0a0a;font-weight:400;">ENG</div>
<div class="t" style="left:1804px;width:3000px;text-align:center;top:2347.3px;font-size:28px;color:#0a0a0a;font-weight:400;">UK</div>
<svg class="a" style="left:3379px;top:2318px;" width="42" height="44" viewBox="0 0 42 44"><rect x="1" y="6" width="28" height="24" rx="2" fill="none" stroke="#0a0a0a" stroke-width="2.5"/><path d="M8 38H24M15 30V38" stroke="#0a0a0a" stroke-width="2.5"/><rect x="28" y="1" width="10" height="12" rx="3" fill="none" stroke="#0a0a0a" stroke-width="2.5"/><path d="M33 13V42" stroke="#0a0a0a" stroke-width="2.5"/></svg>
<svg class="a" style="left:3440px;top:2326px;" width="38" height="30" viewBox="0 0 38 30"><path d="M2 10H9L18 2V28L9 20H2Z" fill="none" stroke="#0a0a0a" stroke-width="2.5"/><path d="M23 9A8 8 0 0 1 23 21M28 5A14 14 0 0 1 28 25" fill="none" stroke="#0a0a0a" stroke-width="2.5"/></svg>
<svg class="a" style="left:3499px;top:2320px;" width="42" height="42" viewBox="0 0 42 42"><path d="M5 0V8M10 0V8M2 8H13V14H7V30" fill="none" stroke="#0a0a0a" stroke-width="3"/><rect x="10" y="14" width="26" height="16" rx="3" fill="none" stroke="#0a0a0a" stroke-width="2.5"/><rect x="14" y="17" width="12" height="10" fill="#0a0a0a"/><rect x="36" y="19" width="4" height="6" fill="#0a0a0a"/></svg>
<div class="t" style="left:731px;width:3000px;text-align:right;top:2308.3px;font-size:28px;color:#0a0a0a;font-weight:400;">11:24</div>
<div class="t" style="left:731px;width:3000px;text-align:right;top:2343.6px;font-size:30px;color:#0a0a0a;font-weight:400;">08/02/2023</div>
<svg class="a" style="left:3751px;top:2320px;" width="41" height="41" viewBox="0 0 41 41"><circle cx="20.5" cy="20.5" r="20" fill="#0a78d8"/><text x="13" y="30" font-family="Liberation Sans" font-size="26" fill="#fff">3</text></svg>
</body></html>
